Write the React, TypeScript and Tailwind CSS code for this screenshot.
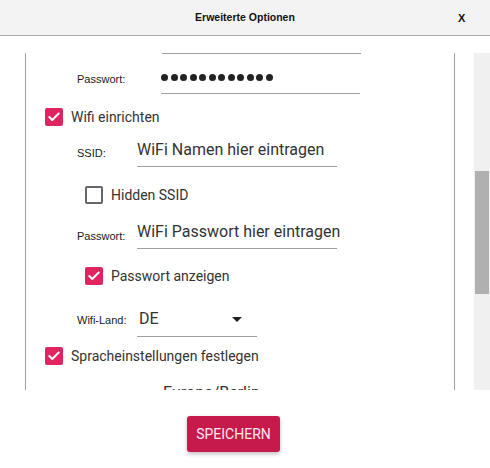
import { Check } from "lucide-react";

const label = "font-['Liberation_Sans',Arial,sans-serif] text-[11px] leading-[14px] text-[#1a1a1a]";
const inputText = "font-['Roboto',sans-serif] text-[16px] leading-[20px] text-[#333] whitespace-nowrap";

function CheckRow({ checked, text, indent, height }: { checked: boolean; text: string; indent: string; height: string }) {
  return (
    <div className={`flex items-center shrink-0 ${indent} ${height}`}>
      {checked ? (
        <div className="w-[18px] h-[18px] rounded-[2px] bg-[#e0245f] flex items-center justify-center">
          <Check className="w-[14px] h-[14px] text-white" strokeWidth={3.5} />
        </div>
      ) : (
        <div className="w-[18px] h-[18px] rounded-[2px] border-2 border-[#666]" />
      )}
      <span className="ml-[8px] font-['Roboto',sans-serif] text-[14px] leading-[20px] text-[#333]">{text}</span>
    </div>
  );
}

export default function App() {
  return (
    <div className="w-[490px] h-[468px] bg-white flex flex-col overflow-hidden">
      <div className="h-[36px] shrink-0 bg-[#f3f3f3] border-b border-[#a8a8a8] flex items-center relative">
        <div className="flex-1 text-center font-['Liberation_Sans',Arial,sans-serif] font-bold text-[10.5px] text-[#111]">
          Erweiterte Optionen
        </div>
        <div className="absolute left-[458px] top-[10px] font-['Liberation_Sans',Arial,sans-serif] font-bold text-[11px] text-[#111]">
          X
        </div>
      </div>

      <div className="mt-[17px] h-[337px] flex shrink-0">
        <div className="w-[474px] overflow-hidden">
          <div className="ml-[25px] w-[430px] h-[337px] border-x border-[#a0a0a0] flex flex-col">
            <div className="ml-[136px] w-[199px] border-t border-[#a0a0a0] shrink-0" />
            <div className="flex items-end h-[40px] shrink-0">
              <span className={`${label} ml-[51px] w-[84px] pb-[8px]`}>Passwort:</span>
              <div className="w-[199px] pt-[13px] pb-[6px] border-b border-[#a0a0a0] flex items-center gap-[2.5px] h-[40px]">
                {Array.from({ length: 12 }).map((_, i) => (
                  <span key={i} className="w-[7px] h-[7px] rounded-full bg-[#222]" />
                ))}
              </div>
            </div>
            <CheckRow checked text="Wifi einrichten" indent="ml-[19px]" height="h-[46px]" />
            <div className="flex items-end shrink-0">
              <span className={`${label} ml-[51px] w-[60px] pb-[7px]`}>SSID:</span>
              <div className={`${inputText} w-[200px] pb-[6px] border-b border-[#a0a0a0]`}>WiFi Namen hier eintragen</div>
            </div>
            <CheckRow checked={false} text="Hidden SSID" indent="ml-[59px]" height="h-[55px]" />
            <div className="flex items-end shrink-0">
              <span className={`${label} ml-[51px] w-[60px] pb-[6px]`}>Passwort:</span>
              <div className={`${inputText} w-[200px] pb-[6px] border-b border-[#a0a0a0]`}>WiFi Passwort hier eintragen</div>
            </div>
            <CheckRow checked text="Passwort anzeigen" indent="ml-[59px]" height="h-[54px]" />
            <div className="flex items-end shrink-0">
              <span className={`${label} ml-[51px] w-[60px] pb-[10px]`}>Wifi-Land:</span>
              <div className={`${inputText} w-[120px] pt-[6px] pb-[7px] pl-[2px] border-b border-[#a0a0a0] flex items-center`}>
                <span className="flex-1">DE</span>
                <svg width="10" height="5" viewBox="0 0 10 5" className="mr-[15px]">
                  <path d="M0 0h10L5 5z" fill="#222" />
                </svg>
              </div>
            </div>
            <CheckRow checked text="Spracheinstellungen festlegen" indent="ml-[19px]" height="h-[38px]" />
            <div className="flex items-end pt-[8px] shrink-0">
              <span className={`${label} ml-[51px] w-[86px] pb-[2px]`}>Zeitzone:</span>
              <div className={inputText}>Europe/Berlin</div>
            </div>
          </div>
        </div>
        <div className="w-[16px] bg-[#f0f0f0] pt-[118px] pl-[1px] pr-[1px]">
          <div className="h-[123px] bg-[#b0b0b0]" />
        </div>
      </div>

      <div className="pt-[26px] pl-[187px]">
        <button className="w-[93px] h-[36px] rounded-[3px] bg-[#c51a4a] shadow-[0_2px_4px_rgba(0,0,0,0.25)] font-['Roboto',sans-serif] text-[14px] text-[#fde8ee]">
          SPEICHERN
        </button>
      </div>
    </div>
  );
}
